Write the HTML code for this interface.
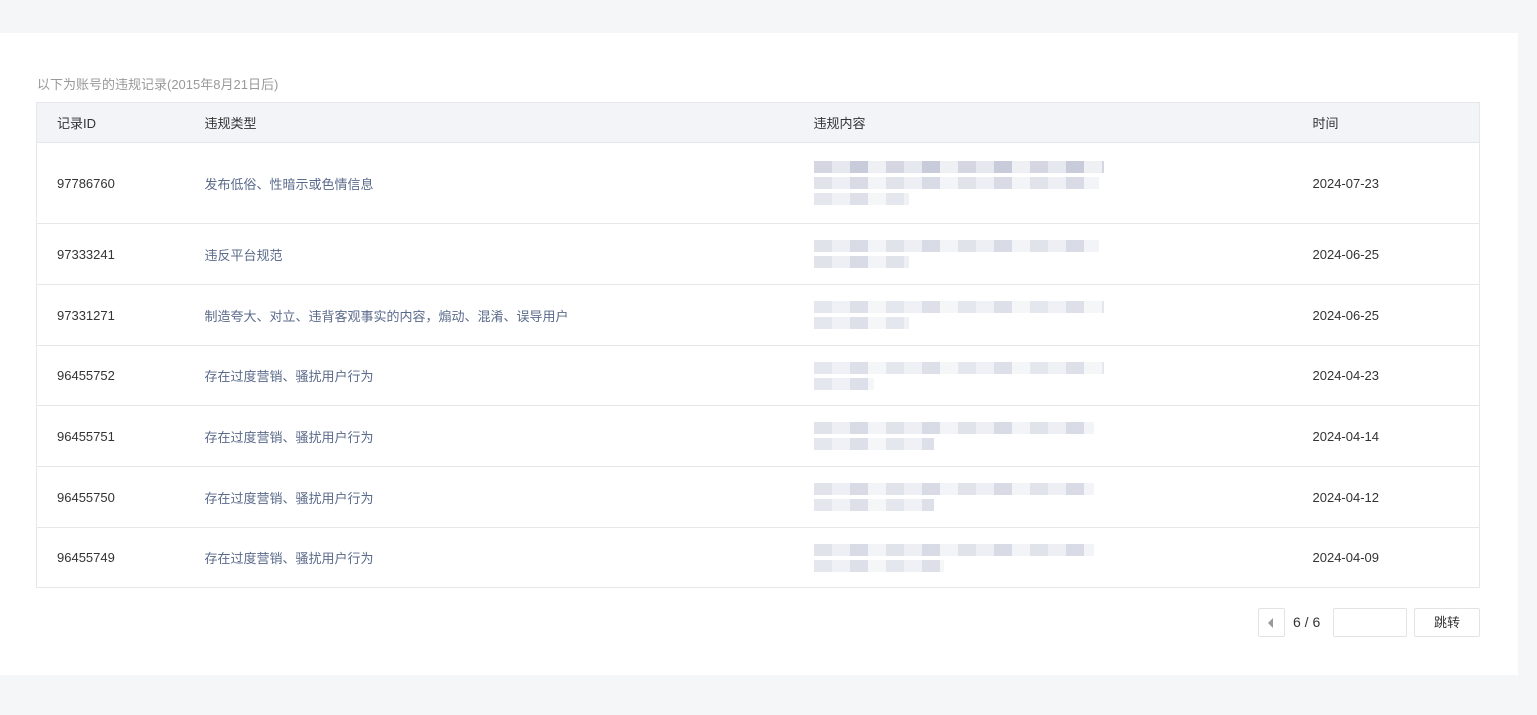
<!DOCTYPE html>
<html><head><meta charset="utf-8"><style>
*{margin:0;padding:0;box-sizing:border-box}
body{width:1537px;height:715px;background:#f5f6f8;font-family:"Liberation Sans","Noto Sans CJK SC",sans-serif;font-size:13px;color:#333;position:relative;overflow:hidden}
.card{position:absolute;left:0;top:33px;width:1518px;height:642px;background:#fff}
.cap{position:absolute;left:37px;top:41px;color:#999;font-size:13px}
table{position:absolute;left:36px;top:69px;width:1444px;border-collapse:collapse;border:1px solid #e6e7eb}
th{background:#f3f4f7;height:40px;text-align:left;font-weight:normal;color:#333;border-bottom:1px solid #e6e7eb}
td{border-bottom:1px solid #e6e7eb;vertical-align:middle}
th,td{padding:0}
.c1{padding-left:20px;width:168px}
.c2{width:609px;color:#5a6a8a}
.c3{width:499px}
.t{color:#5a6a8a}
.bl{height:12px;margin:4px 0;background:repeating-linear-gradient(90deg,#d4d7e2 0 18px,#e6e8ef 18px 36px,#c8ccda 36px 54px,#eef0f4 54px 72px)}
.pg{position:absolute;top:608px;height:29px;border:1px solid #e3e3e3;border-radius:2px;background:#fff}
</style></head><body>
<div class="card"><div class="cap">以下为账号的违规记录(2015年8月21日后)</div></div>
<table style="top:102px">
<tr><th class="c1">记录ID</th><th>违规类型</th><th>违规内容</th><th>时间</th></tr>
<tr style="height:81px"><td class="c1">97786760</td><td class="c2">发布低俗、性暗示或色情信息</td><td class="c3"><div class="bl" style="width:290px"></div><div class="bl" style="width:285px;opacity:.7"></div><div class="bl" style="width:95px;opacity:.6"></div></td><td>2024-07-23</td></tr>
<tr style="height:61px"><td class="c1">97333241</td><td class="c2">违反平台规范</td><td class="c3"><div class="bl" style="width:285px;opacity:.7"></div><div class="bl" style="width:95px;opacity:.7"></div></td><td>2024-06-25</td></tr>
<tr style="height:61px"><td class="c1">97331271</td><td class="c2">制造夸大、对立、违背客观事实的内容，煽动、混淆、误导用户</td><td class="c3"><div class="bl" style="width:290px;opacity:.6"></div><div class="bl" style="width:95px;opacity:.6"></div></td><td>2024-06-25</td></tr>
<tr style="height:60px"><td class="c1">96455752</td><td class="c2">存在过度营销、骚扰用户行为</td><td class="c3"><div class="bl" style="width:290px;opacity:.6"></div><div class="bl" style="width:60px;opacity:.6"></div></td><td>2024-04-23</td></tr>
<tr style="height:61px"><td class="c1">96455751</td><td class="c2">存在过度营销、骚扰用户行为</td><td class="c3"><div class="bl" style="width:280px;opacity:.7"></div><div class="bl" style="width:120px;opacity:.6"></div></td><td>2024-04-14</td></tr>
<tr style="height:61px"><td class="c1">96455750</td><td class="c2">存在过度营销、骚扰用户行为</td><td class="c3"><div class="bl" style="width:280px;opacity:.7"></div><div class="bl" style="width:120px;opacity:.6"></div></td><td>2024-04-12</td></tr>
<tr style="height:60px"><td class="c1">96455749</td><td class="c2">存在过度营销、骚扰用户行为</td><td class="c3"><div class="bl" style="width:280px;opacity:.7"></div><div class="bl" style="width:130px;opacity:.6"></div></td><td>2024-04-09</td></tr>
</table>
<div class="pg" style="left:1258px;width:27px"><div style="position:absolute;left:9px;top:9px;width:0;height:0;border-top:5px solid transparent;border-bottom:5px solid transparent;border-right:5px solid #999"></div></div>
<div style="position:absolute;left:1293px;top:614px;font-size:14px;color:#333">6 / 6</div>
<div class="pg" style="left:1333px;width:74px"></div>
<div class="pg" style="left:1414px;width:66px;text-align:center;line-height:27px;font-size:13px">跳转</div>
</body></html>
